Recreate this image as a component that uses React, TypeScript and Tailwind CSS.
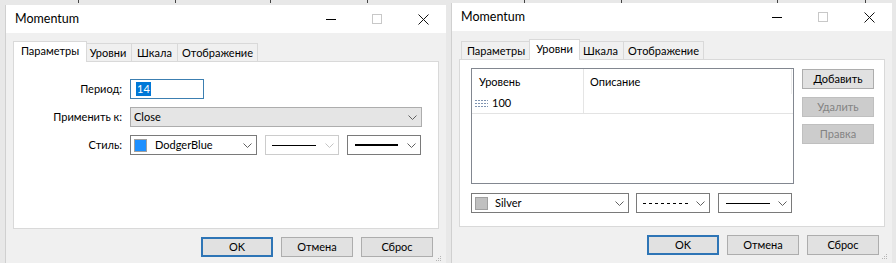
import React from "react";

function Chev({ c = "#606060" }: { c?: string }) {
  return (
    <svg width="9" height="5" viewBox="0 0 9 5">
      <path d="M0.5 0.5 L4.5 4.5 L8.5 0.5" fill="none" stroke={c} strokeWidth="1" />
    </svg>
  );
}

function Select({
  w,
  children,
  disabled,
  grey,
}: {
  w: string;
  children?: React.ReactNode;
  disabled?: boolean;
  grey?: boolean;
}) {
  return (
    <div
      className={
        "flex h-[20px] items-center border " +
        w +
        " " +
        (disabled
          ? "border-[#cccccc] bg-white"
          : grey
          ? "border-[#adadad] bg-[#e5e5e5]"
          : "border-[#7a7a7a] bg-white")
      }
    >
      <div className="flex min-w-0 flex-1 items-center">{children}</div>
      <div className="flex w-[17px] shrink-0 items-center justify-center">
        <Chev c={disabled ? "#c4c4c4" : "#606060"} />
      </div>
    </div>
  );
}

function Btn({
  children,
  def,
  disabled,
}: {
  children: React.ReactNode;
  def?: boolean;
  disabled?: boolean;
}) {
  return (
    <div
      className={
        "flex h-[20px] w-[72px] items-center justify-center " +
        (def
          ? "border-2 border-[#2e75b6] bg-[#e1e1e1] text-black"
          : disabled
          ? "border border-[#bfbfbf] bg-[#cccccc] text-[#838383]"
          : "border border-[#adadad] bg-[#e1e1e1] text-black")
      }
    >
      {children}
    </div>
  );
}

function TitleBar() {
  return (
    <div className="flex h-[28px] items-center bg-white">
      <div className="flex-1 pl-[9px] text-[12.5px] text-black">Momentum</div>
      <div className="flex h-full w-[46px] items-center justify-center">
        <div className="h-[1px] w-[10px] bg-black" />
      </div>
      <div className="flex h-full w-[46px] items-center justify-center">
        <div className="h-[10px] w-[10px] border border-[#c8c8c8]" />
      </div>
      <div className="flex h-full w-[46px] items-center justify-center">
        <svg width="11" height="11" viewBox="0 0 11 11">
          <path d="M0.5 0.5 L10.5 10.5 M10.5 0.5 L0.5 10.5" stroke="#111" strokeWidth="1" />
        </svg>
      </div>
    </div>
  );
}

const TABS: [string, number][] = [
  ["Параметры", 70],
  ["Уровни", 47],
  ["Шкала", 46],
  ["Отображение", 80],
];

function Tabs({ active }: { active: number }) {
  return (
    <div className="flex h-[20px] items-end pl-[2px]">
      {TABS.map(([t, w], i) =>
        i === active ? (
          <div
            key={t}
            style={{ width: w + 4 }}
            className="relative z-10 -mx-[2px] -mb-[1px] flex h-[21px] items-center justify-center border border-b-0 border-[#d9d9d9] bg-white pb-[1px] text-black"
          >
            {t}
          </div>
        ) : (
          <div
            key={t}
            style={{ width: w }}
            className="flex h-[18px] items-center justify-center border border-b-0 border-l-0 border-[#d9d9d9] bg-[#f0f0f0] pt-[1px] text-black first:border-l"
          >
            {t}
          </div>
        )
      )}
    </div>
  );
}

function Grip() {
  return (
    <svg width="7" height="7" viewBox="0 0 7 7" className="ml-[2px] mt-[18px]">
      <rect x="5" y="1" width="1" height="1" fill="#b5b5b5" />
      <rect x="3" y="3" width="1" height="1" fill="#b5b5b5" />
      <rect x="5" y="3" width="1" height="1" fill="#b5b5b5" />
      <rect x="1" y="5" width="1" height="1" fill="#b5b5b5" />
      <rect x="3" y="5" width="1" height="1" fill="#b5b5b5" />
      <rect x="5" y="5" width="1" height="1" fill="#b5b5b5" />
    </svg>
  );
}

function Footer() {
  return (
    <div className="mt-[8px] flex items-start justify-end gap-[8px] pr-[4px]">
      <Btn def>OK</Btn>
      <Btn>Отмена</Btn>
      <div className="flex items-start">
        <Btn>Сброс</Btn>
        <Grip />
      </div>
    </div>
  );
}

function Swatch({ c }: { c: string }) {
  return <div className="ml-[3px] h-[13px] w-[13px] shrink-0 border border-[#a0a0a0]" style={{ background: c }} />;
}

function LeftWindow() {
  return (
    <div className="mt-[2px] h-[270px] w-[441px] shrink-0 border-l border-[#d0d0d0] bg-[#f0f0f0]">
      <TitleBar />
      <div className="px-[7px] pt-[8px]">
        <Tabs active={0} />
        <div className="h-[168px] border border-[#d9d9d9] bg-white pt-[17px]">
          <div className="grid grid-cols-[108px_auto] items-center gap-x-[8px] gap-y-[8px] text-black">
            <div className="text-right">Период:</div>
            <div className="flex h-[20px] w-[74px] items-center border border-[#3c7fb1] bg-white pl-[5px]">
              <span className="bg-[#0078d7] px-[1px] leading-[14px] text-white">14</span>
            </div>
            <div className="text-right">Применить к:</div>
            <Select w="w-[292px]" grey>
              <span className="pl-[3px]">Close</span>
            </Select>
            <div className="text-right">Стиль:</div>
            <div className="flex gap-[8px]">
              <Select w="w-[127px]">
                <Swatch c="#1e90ff" />
                <span className="pl-[8px]">DodgerBlue</span>
              </Select>
              <Select w="w-[74px]" disabled>
                <div className="ml-[6px] h-[1px] w-[44px] bg-black" />
              </Select>
              <Select w="w-[74px]">
                <div className="ml-[7px] h-[2px] w-[43px] bg-black" />
              </Select>
            </div>
          </div>
        </div>
      </div>
      <Footer />
    </div>
  );
}

function DashIcon() {
  return (
    <svg width="13" height="9" viewBox="0 0 13 9">
      {[1, 4, 7].map((y) => (
        <path key={y} d={`M0 ${y + 0.5} H13`} stroke="#7f93b0" strokeWidth="1" strokeDasharray="2 1" />
      ))}
    </svg>
  );
}

function RightWindow() {
  return (
    <div className="ml-[5px] h-[270px] w-[441px] shrink-0 border-l border-[#d0d0d0] bg-[#f0f0f0]">
      <TitleBar />
      <div className="px-[7px] pt-[8px]">
        <Tabs active={1} />
        <div className="h-[168px] border border-[#d9d9d9] bg-white pl-[11px] pt-[8px] text-black">
          <div className="flex gap-[8px]">
            <div className="h-[116px] w-[323px] border border-[#828790] bg-white">
              <div className="flex h-[25px] items-center">
                <div className="flex h-full w-[112px] items-center border-r border-[#e5e5e5] pl-[7px] pt-[1px]">Уровень</div>
                <div className="flex h-full w-[208px] items-center border-r border-[#ececec] pl-[6px] pt-[1px]">Описание</div>
              </div>
              <div className="flex h-[20px] border-b border-[#e3e3e3]">
                <div className="flex h-full w-[112px] items-center border-r border-[#e5e5e5] pl-[3px]">
                  <DashIcon />
                  <span className="pl-[4px]">100</span>
                </div>
              </div>
            </div>
            <div className="flex flex-col pt-[1px]">
              <Btn>Добавить</Btn>
              <div className="mt-[8px]">
                <Btn disabled>Удалить</Btn>
              </div>
              <div className="mt-[7px]">
                <Btn disabled>Правка</Btn>
              </div>
            </div>
          </div>
          <div className="mt-[9px] flex">
            <Select w="w-[158px]">
              <Swatch c="#c0c0c0" />
              <span className="pl-[7px]">Silver</span>
            </Select>
            <div className="ml-[7px]">
              <Select w="w-[74px]">
                <svg width="46" height="1" className="ml-[6px]">
                  <path d="M0 0.5 H46" stroke="#000" strokeWidth="1" strokeDasharray="3 3" />
                </svg>
              </Select>
            </div>
            <div className="ml-[8px]">
              <Select w="w-[74px]">
                <div className="ml-[7px] h-[1px] w-[44px] bg-black" />
              </Select>
            </div>
          </div>
        </div>
      </div>
      <Footer />
    </div>
  );
}

const TICKS = [78, 175, 270, 367, 524, 621, 777, 865];

export default function App() {
  return (
    <div className="flex h-[263px] w-[896px] flex-col overflow-hidden bg-[#e8e8e8] font-['Lato','Noto_Sans',sans-serif] text-[11px]">
      <div className="flex h-[3px] shrink-0">
        {TICKS.map((x, i) => (
          <div
            key={x}
            className="h-[3px] w-[1px] bg-[#444]"
            style={{ marginLeft: i === 0 ? x : x - TICKS[i - 1] - 1 }}
          />
        ))}
      </div>
      <div className="flex items-start pl-[5px]">
        <LeftWindow />
        <RightWindow />
      </div>
    </div>
  );
}
